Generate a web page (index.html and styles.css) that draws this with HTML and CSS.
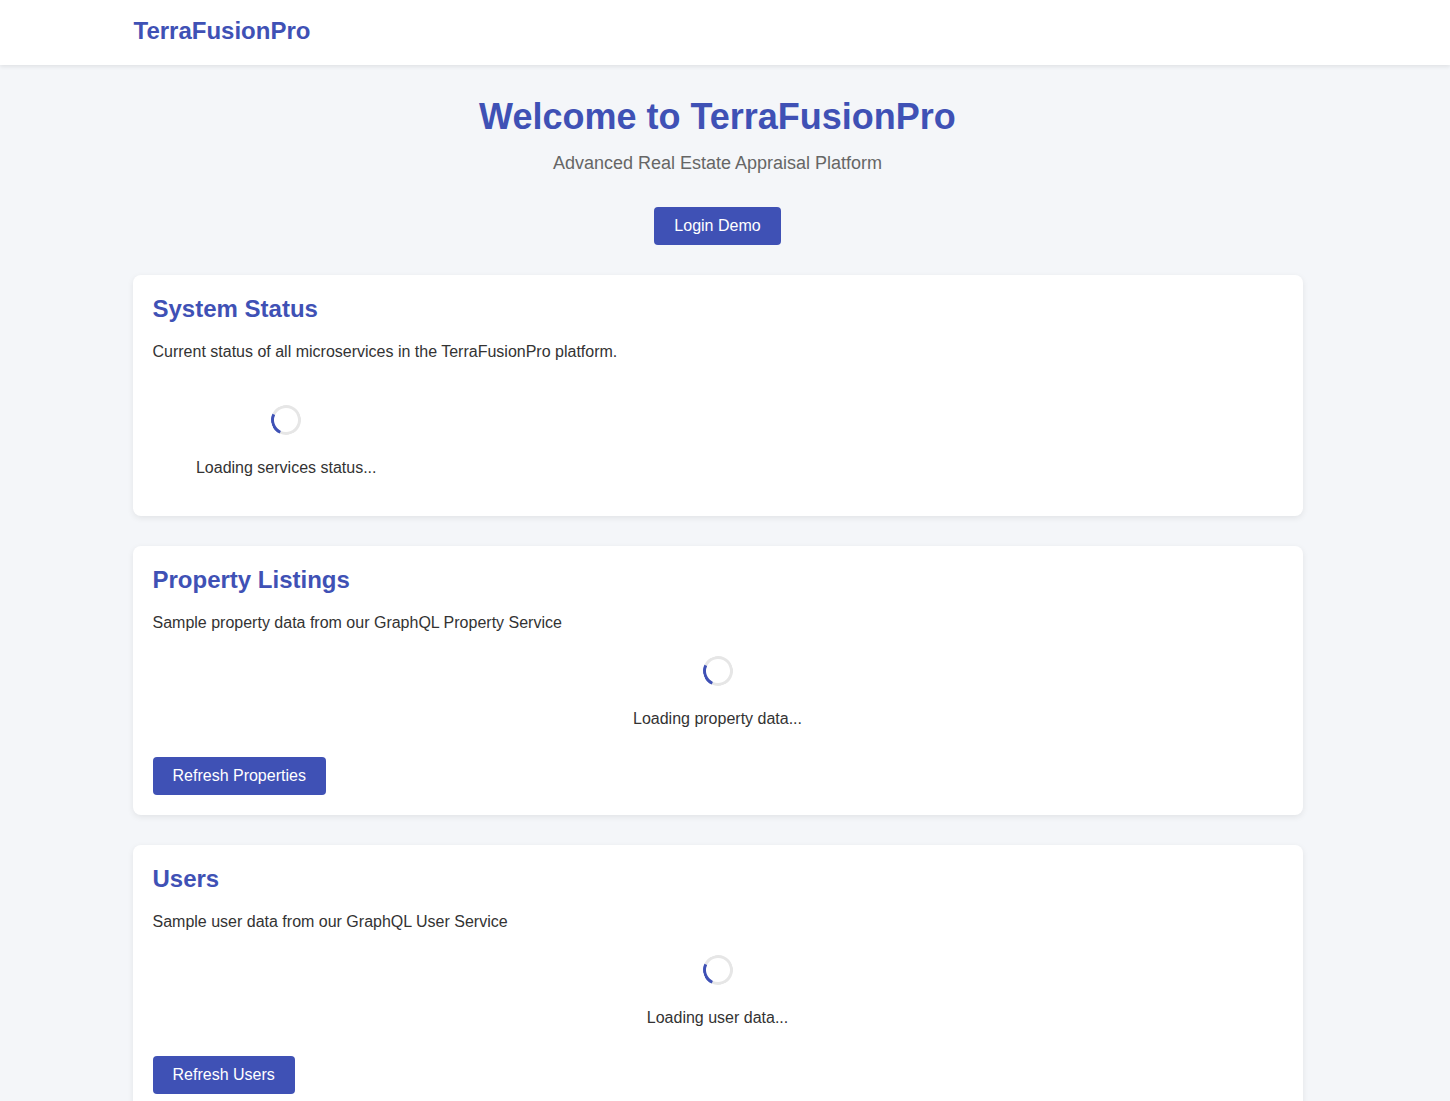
FILE: index.html
```html
<!DOCTYPE html>
<html lang="en">
<head>
<meta charset="utf-8">
<title>TerraFusionPro</title>
<link rel="stylesheet" href="styles.css">
</head>
<body>
<header class="site-header">
  <div class="container header-inner">
    <div class="logo">TerraFusionPro</div>
  </div>
</header>
<main class="container main">
  <section class="hero">
    <h1 class="hero-title">Welcome to TerraFusionPro</h1>
    <p class="hero-sub">Advanced Real Estate Appraisal Platform</p>
    <button class="btn">Login Demo</button>
  </section>

  <section class="card">
    <h2 class="card-title">System Status</h2>
    <p class="card-desc">Current status of all microservices in the TerraFusionPro platform.</p>
    <div class="services-grid">
      <div class="loading">
        <div class="spinner"></div>
        <p class="loading-text">Loading services status...</p>
      </div>
    </div>
  </section>

  <section class="card">
    <h2 class="card-title">Property Listings</h2>
    <p class="card-desc">Sample property data from our GraphQL Property Service</p>
    <div class="loading loading-wide">
      <div class="spinner"></div>
      <p class="loading-text">Loading property data...</p>
    </div>
    <button class="btn btn-card">Refresh Properties</button>
  </section>

  <section class="card">
    <h2 class="card-title">Users</h2>
    <p class="card-desc">Sample user data from our GraphQL User Service</p>
    <div class="loading loading-wide">
      <div class="spinner"></div>
      <p class="loading-text">Loading user data...</p>
    </div>
    <button class="btn btn-card">Refresh Users</button>
  </section>
</main>
</body>
</html>
```
FILE: styles.css
```css
* { box-sizing: border-box; }
html, body { margin: 0; padding: 0; }
body {
  font-family: "Liberation Sans", Arial, sans-serif;
  background: #f4f6f9;
  color: #333;
  font-size: 16px;
}
.container {
  max-width: 1185px;
  margin: 0 auto;
  padding-right: 15px;
}
.site-header {
  background: #fff;
  height: 65px;
  box-shadow: 0 2px 4px rgba(0,0,0,0.08);
}
.header-inner {
  height: 65px;
  display: flex;
  align-items: center;
  padding-left: 1px;
}
.logo {
  font-size: 24px;
  font-weight: bold;
  color: #3f51b5;
  margin-top: -3px;
}
.main {
  padding-top: 31px;
  padding-bottom: 40px;
}
.hero {
  text-align: center;
  margin-bottom: 30px;
}
.hero-title {
  font-size: 36px;
  color: #3f51b5;
  margin: 0 0 15px;
}
.hero-sub {
  font-size: 18px;
  color: #666;
  margin: 0 0 33px;
}
.btn {
  font-family: inherit;
  font-size: 16px;
  background: #3f51b5;
  color: #fff;
  border: none;
  border-radius: 4px;
  padding: 10px 20px;
  line-height: 18px;
  cursor: pointer;
}
.card {
  background: #fff;
  border-radius: 8px;
  box-shadow: 0 2px 6px rgba(0,0,0,0.08);
  padding: 20px;
  margin-bottom: 30px;
}
.card-title {
  font-size: 24px;
  color: #3f51b5;
  margin: 0 0 20px;
}
.card-desc {
  margin: 0 0 16px;
}
.services-grid {
  display: grid;
  grid-template-columns: repeat(4, 1fr);
  gap: 20px;
  margin-top: 36px;
}
.loading {
  text-align: center;
  padding: 8px 0 10px;
}
.services-grid .loading {
  padding-bottom: 19px;
}
.spinner {
  width: 30px;
  height: 30px;
  border: 3px solid #e6e6e6;
  border-left-color: #3f51b5;
  border-radius: 50%;
  margin: 0 auto 23px;
  transform: rotate(-20deg);
}
.loading-text {
  margin: 0;
  line-height: 19px;
}
.btn-card {
  margin-top: 19px;
}
```
